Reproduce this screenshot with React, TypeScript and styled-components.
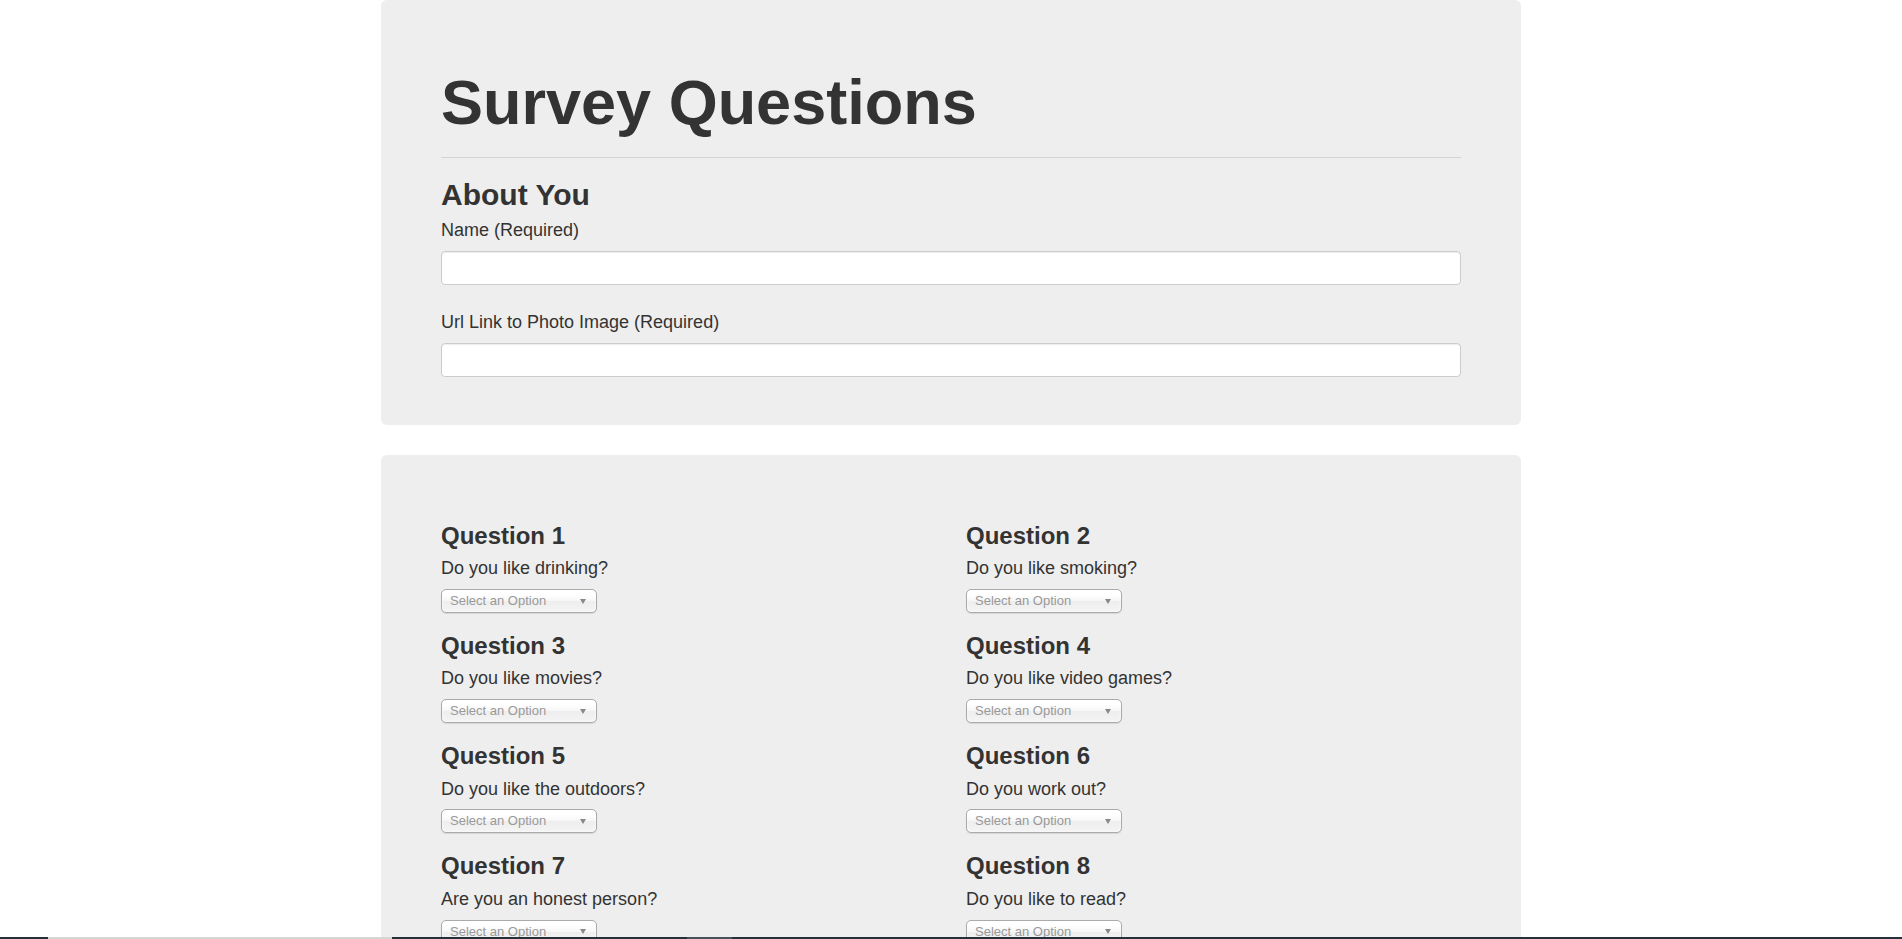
import React from "react";
import styled, { createGlobalStyle } from "styled-components";

const GlobalStyle = createGlobalStyle`
  html, body {
    margin: 0;
    padding: 0;
    overflow: hidden;
    background: #fff;
  }
  body {
    font-family: "Liberation Sans", Arial, Helvetica, sans-serif;
    font-size: 14px;
    line-height: 1.42857;
    color: #333;
  }
  * {
    box-sizing: border-box;
  }
`;

const Container = styled.div`
  width: 1170px;
  margin: 0 auto;
  padding: 0 15px;
`;

const Jumbotron = styled.section`
  background: #eee;
  border-radius: 6px;
  padding: 48px 60px;
  margin-bottom: 30px;
`;

const Title = styled.h1`
  font-size: 63px;
  font-weight: 700;
  line-height: 1.1;
  margin: 20px 0 10px;
  color: #333;
`;

const Divider = styled.hr`
  border: 0;
  border-top: 1px solid #d3d3d3;
  margin: 20px 0;
  height: 0;
`;

const SectionTitle = styled.h2`
  font-size: 30px;
  font-weight: 700;
  line-height: 1.1;
  margin: 20px 0 10px;
`;

const FieldGroup = styled.div<{ $last?: boolean }>`
  margin-bottom: ${(p) => (p.$last ? "0" : "28px")};
`;

const FieldLabel = styled.label`
  display: block;
  font-size: 18px;
  font-weight: 400;
  line-height: 1.1;
  margin: 0 0 10px;
`;

const TextInput = styled.input`
  display: block;
  width: 100%;
  height: 34px;
  padding: 6px 12px;
  font-size: 14px;
  font-family: inherit;
  color: #555;
  background: #fff;
  border: 1px solid #ccc;
  border-radius: 4px;
  box-shadow: inset 0 1px 1px rgba(0, 0, 0, 0.075);
`;

const QuestionGrid = styled.div`
  display: grid;
  grid-template-columns: 1fr 1fr;
  column-gap: 30px;
`;

const Question = styled.div`
  display: flex;
  flex-direction: column;
  align-items: flex-start;
`;

const QuestionTitle = styled.h3`
  font-size: 24px;
  font-weight: 700;
  line-height: 1.1;
  margin: 20px 0 10px;
`;

const Prompt = styled.h4`
  font-size: 18px;
  font-weight: 400;
  line-height: 1.1;
  margin: 0 0 10px;
`;

const Dropdown = styled.div`
  display: flex;
  align-items: center;
  justify-content: space-between;
  width: 156px;
  height: 24px;
  padding: 0 7px 0 8px;
  border: 1px solid #aaa;
  border-radius: 5px;
  background: linear-gradient(#fff 20%, #f6f6f6 50%, #eee 52%, #f4f4f4 100%);
  box-shadow: inset 0 0 3px #fff, 0 1px 1px rgba(0, 0, 0, 0.1);
  color: #999;
  font-size: 13px;
  line-height: 22px;
  cursor: pointer;
`;

const Arrow = styled.span`
  width: 0;
  height: 0;
  border-left: 3px solid transparent;
  border-right: 3px solid transparent;
  border-top: 5px solid #888;
  margin-right: 3px;
`;

const Taskbar = styled.div`
  position: fixed;
  left: 0;
  right: 0;
  bottom: 0;
  height: 2px;
  display: flex;
  background: #25313a;
`;

const TaskSegment = styled.span<{ $w: number; $c: string }>`
  width: ${(p) => p.$w}px;
  background: ${(p) => p.$c};
`;

const questions = [
  "Do you like drinking?",
  "Do you like smoking?",
  "Do you like movies?",
  "Do you like video games?",
  "Do you like the outdoors?",
  "Do you work out?",
  "Are you an honest person?",
  "Do you like to read?",
];

export default function App() {
  return (
    <>
      <GlobalStyle />
      <Container>
        <Jumbotron>
          <Title>Survey Questions</Title>
          <Divider />
          <SectionTitle>About You</SectionTitle>
          <FieldGroup>
            <FieldLabel>Name (Required)</FieldLabel>
            <TextInput type="text" />
          </FieldGroup>
          <FieldGroup $last>
            <FieldLabel>Url Link to Photo Image (Required)</FieldLabel>
            <TextInput type="text" />
          </FieldGroup>
        </Jumbotron>

        <Jumbotron>
          <QuestionGrid>
            {questions.map((q, i) => (
              <Question key={i}>
                <QuestionTitle>Question {i + 1}</QuestionTitle>
                <Prompt>{q}</Prompt>
                <Dropdown>
                  <span>Select an Option</span>
                  <Arrow />
                </Dropdown>
              </Question>
            ))}
          </QuestionGrid>
        </Jumbotron>
      </Container>
      <Taskbar>
        <TaskSegment $w={48} $c="#25313a" />
        <TaskSegment $w={344} $c="#d6d6d6" />
        <TaskSegment $w={295} $c="#25313a" />
        <TaskSegment $w={45} $c="#46535b" />
      </Taskbar>
    </>
  );
}
